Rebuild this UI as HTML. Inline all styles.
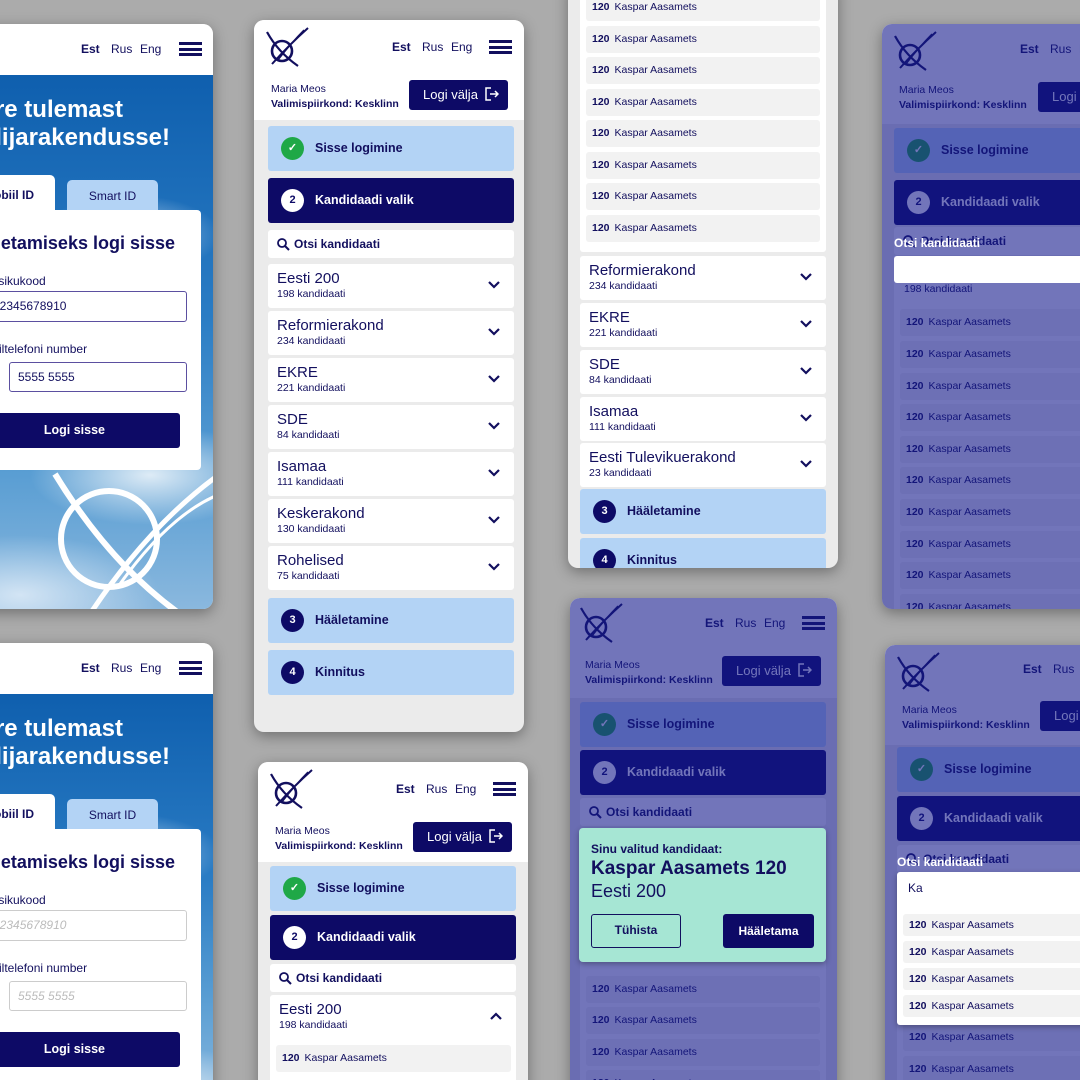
<!DOCTYPE html>
<html><head><meta charset="utf-8"><style>
*{box-sizing:border-box;margin:0;padding:0}
html{width:1080px;height:1080px;overflow:hidden}
body{width:1080px;height:1080px;overflow:hidden;background:#ababab;font-family:"Liberation Sans",sans-serif;color:#120f5e;position:relative}
.ph{position:absolute;border-radius:10px;overflow:hidden;background:#ebebeb;box-shadow:0 4px 14px rgba(0,0,0,.35)}
.ab{position:absolute}
.hdr{position:absolute;left:0;top:0;width:100%;height:100px;background:#fff}
.lang{position:absolute;top:20px;font-size:12px}
.ham{position:absolute;width:23px;height:14px;border-top:3px solid #120f5e;border-bottom:3px solid #120f5e}
.ham:after{content:"";position:absolute;left:0;right:0;top:2.5px;height:3px;background:#120f5e}
.nm{position:absolute;left:17px;top:62px;font-size:10.5px;line-height:15px}
.out{position:absolute;left:155px;top:60px;width:99px;height:30px;background:#0d0a66;color:#fff;border-radius:3px;font-size:13px;line-height:30px;padding-left:14px}
.step{position:absolute;left:14px;width:246px;height:45px;border-radius:3px;font-size:12.5px;font-weight:bold;line-height:45px;padding-left:47px}
.s1{background:#b3d3f5}
.s2{background:#0d0a66;color:#fff}
.s3{background:#b3d3f5}
.circ{position:absolute;left:13px;top:11px;width:23px;height:23px;border-radius:50%;line-height:23px;text-align:center;font-size:11px}
.s1 .circ{background:#1fa847;color:#fff}
.s2 .circ{background:#fff;color:#0d0a66}
.s3 .circ{background:#0d0a66;color:#fff}
.srch{position:absolute;left:14px;width:246px;height:28px;background:#fff;border-radius:3px;font-size:12px;font-weight:bold;line-height:28px;padding-left:26px}
.card{position:absolute;left:14px;width:246px;height:44px;background:#fff;border-radius:3px;padding:6px 0 0 9px}
.card b{display:block;font-weight:normal;font-size:15px;line-height:17px}
.card i{display:block;font-style:normal;font-size:10.5px;line-height:14px}
.chev{position:absolute;right:14px;top:17px}
.it{position:absolute;height:27px;background:#f2f2f2;border-radius:3px;font-size:10.5px;line-height:27px;padding-left:6px}
.it b{margin-right:5px}
.ov{position:absolute;left:0;top:0;right:0;bottom:0;background:rgba(20,25,140,.6)}
.sky{position:absolute;left:0;top:51px;right:0;bottom:0;background:radial-gradient(ellipse 120px 50px at 180px 400px,rgba(255,255,255,.8),rgba(255,255,255,0)),radial-gradient(ellipse 140px 60px at 50px 520px,rgba(230,240,250,.8),rgba(255,255,255,0)),radial-gradient(ellipse 90px 40px at 160px 160px,rgba(230,240,250,.7),rgba(255,255,255,0)),linear-gradient(180deg,#0f5fae 0%,#2a7cc4 45%,#5a9ed3 75%,#8ab8de 100%)}
.ttl{position:absolute;color:#fff;font-weight:bold;font-size:24px;white-space:nowrap}
.inp{position:absolute;border:1px solid #5b4fa0;border-radius:3px;background:#fff;font-size:12px;padding-left:8px}
</style></head><body>

<svg width="0" height="0" style="position:absolute"><defs>
<g id="logo"><circle cx="18" cy="25" r="10" fill="none" stroke="#120f5e" stroke-width="2.6"/><path d="M3 6 Q14 26 34 40" fill="none" stroke="#120f5e" stroke-width="2.2"/><path d="M8 38 Q26 18 44 2" fill="none" stroke="#120f5e" stroke-width="2"/><path d="M14 34 Q28 16 40 4" fill="none" stroke="#120f5e" stroke-width="1.4"/></g>
<g id="chv"><path d="M1 1 L6 6 L11 1" fill="none" stroke="#120f5e" stroke-width="2.2"/></g>
<g id="mag"><circle cx="5" cy="5" r="4" fill="none" stroke="#120f5e" stroke-width="1.8"/><path d="M8 8 L12 12" stroke="#120f5e" stroke-width="2"/></g>
<g id="exit"><path d="M6 1 H1 V13 H6" fill="none" stroke="#fff" stroke-width="1.5"/><path d="M5 7 H13 M10 4 L13 7 L10 10" fill="none" stroke="#fff" stroke-width="1.5"/></g>
</defs></svg>

<!-- Phone A -->
<div class="ph" style="left:-30px;top:24px;width:243px;height:585px">
 <div class="ab" style="left:0;top:0;width:100%;height:51px;background:#fff"></div>
 <div class="lang" style="left:111px;top:18px;font-weight:bold">Est</div>
 <div class="lang" style="left:141px;top:18px">Rus</div>
 <div class="lang" style="left:170px;top:18px">Eng</div>
 <div class="ham" style="left:209px;top:18px"></div>
 <div class="sky"></div>
 <svg class="ab" style="left:0;top:420px" width="243" height="165"><circle cx="139" cy="95" r="48" fill="none" stroke="#fff" stroke-width="6"/><path d="M85 30 Q140 120 210 170" fill="none" stroke="#fff" stroke-width="6"/><path d="M120 170 Q180 80 250 30" fill="none" stroke="#fff" stroke-width="5"/><path d="M150 140 Q200 70 250 50" fill="none" stroke="#fff" stroke-width="3"/></svg>
 <div class="ttl" style="right:90px;top:72px">Tere tulemast</div>
 <div class="ttl" style="right:43px;top:100px">valijarakendusse!</div>
 <div class="ab" style="left:0;top:151px;width:85px;height:40px;background:#fff;border-radius:5px 5px 0 0;font-size:12px;font-weight:bold;line-height:40px;padding-left:14px">Mobiil ID</div>
 <div class="ab" style="left:97px;top:156px;width:91px;height:35px;background:#b3d3f5;border-radius:5px 5px 0 0;font-size:12px;line-height:33px;text-align:center">Smart ID</div>
 <div class="ab" style="left:0;top:186px;width:231px;height:260px;background:#fff;border-radius:0 4px 4px 4px"></div>
 <div class="ab" style="right:38px;top:209px;font-size:18px;font-weight:bold;white-space:nowrap">Hääletamiseks logi sisse</div>
 <div class="ab" style="left:25px;top:250px;font-size:12px">Isikukood</div>
 <div class="inp" style="left:12px;top:267px;width:205px;height:31px;line-height:29px;padding-left:10px">12345678910</div>
 <div class="ab" style="left:3px;top:318px;font-size:12px">Mobiiltelefoni number</div>
 <div class="inp" style="left:39px;top:338px;width:178px;height:30px;line-height:28px">5555 5555</div>
 <div class="ab" style="left:12px;top:389px;width:198px;height:35px;background:#0d0a66;border-radius:3px;color:#fff;font-size:12.5px;font-weight:bold;line-height:35px;text-align:right;padding-right:75px">Logi sisse</div>
</div>

<!-- Phone B -->
<div class="ph" style="left:-30px;top:643px;width:243px;height:460px">
 <div class="ab" style="left:0;top:0;width:100%;height:51px;background:#fff"></div>
 <div class="lang" style="left:111px;top:18px;font-weight:bold">Est</div>
 <div class="lang" style="left:141px;top:18px">Rus</div>
 <div class="lang" style="left:170px;top:18px">Eng</div>
 <div class="ham" style="left:209px;top:18px"></div>
 <div class="sky"></div>
 <div class="ttl" style="right:90px;top:72px">Tere tulemast</div>
 <div class="ttl" style="right:43px;top:100px">valijarakendusse!</div>
 <div class="ab" style="left:0;top:151px;width:85px;height:40px;background:#fff;border-radius:5px 5px 0 0;font-size:12px;font-weight:bold;line-height:40px;padding-left:14px">Mobiil ID</div>
 <div class="ab" style="left:97px;top:156px;width:91px;height:35px;background:#b3d3f5;border-radius:5px 5px 0 0;font-size:12px;line-height:33px;text-align:center">Smart ID</div>
 <div class="ab" style="left:0;top:186px;width:231px;height:274px;background:#fff;border-radius:0 4px 0 0"></div>
 <div class="ab" style="right:38px;top:209px;font-size:18px;font-weight:bold;white-space:nowrap">Hääletamiseks logi sisse</div>
 <div class="ab" style="left:25px;top:250px;font-size:12px">Isikukood</div>
 <div class="inp" style="left:12px;top:267px;width:205px;height:31px;line-height:29px;padding-left:10px;border-color:#ccc;color:#bbb;font-style:italic">12345678910</div>
 <div class="ab" style="left:3px;top:318px;font-size:12px">Mobiiltelefoni number</div>
 <div class="inp" style="left:39px;top:338px;width:178px;height:30px;line-height:28px;border-color:#ccc;color:#bbb;font-style:italic">5555 5555</div>
 <div class="ab" style="left:12px;top:389px;width:198px;height:35px;background:#0d0a66;border-radius:3px;color:#fff;font-size:12.5px;font-weight:bold;line-height:35px;text-align:right;padding-right:75px">Logi sisse</div>
</div>

<!-- Phone C -->
<div class="ph" style="left:254px;top:20px;width:270px;height:712px">
 <div class="hdr"></div>
 <svg class="ab" style="left:10px;top:6px" width="46" height="42"><use href="#logo"/></svg>
 <div class="lang" style="left:138px;font-weight:bold">Est</div><div class="lang" style="left:168px">Rus</div><div class="lang" style="left:197px">Eng</div>
 <div class="ham" style="left:235px;top:20px"></div>
 <div class="nm">Maria Meos<br><b>Valimispiirkond: Kesklinn</b></div>
 <div class="out">Logi välja <svg width="14" height="14" style="vertical-align:-2px;margin-left:3px"><use href="#exit"/></svg></div>
 <div class="step s1" style="top:106px"><span class="circ">✓</span>Sisse logimine</div>
 <div class="step s2" style="top:158px"><span class="circ">2</span>Kandidaadi valik</div>
 <div class="srch" style="top:210px"><svg class="ab" style="left:9px;top:8px" width="13" height="13"><use href="#mag"/></svg>Otsi kandidaati</div>
 <div class="card" style="top:244px"><b>Eesti 200</b><i>198 kandidaati</i><svg class="chev" width="12" height="8"><use href="#chv"/></svg></div>
 <div class="card" style="top:291px"><b>Reformierakond</b><i>234 kandidaati</i><svg class="chev" width="12" height="8"><use href="#chv"/></svg></div>
 <div class="card" style="top:338px"><b>EKRE</b><i>221 kandidaati</i><svg class="chev" width="12" height="8"><use href="#chv"/></svg></div>
 <div class="card" style="top:385px"><b>SDE</b><i>84 kandidaati</i><svg class="chev" width="12" height="8"><use href="#chv"/></svg></div>
 <div class="card" style="top:432px"><b>Isamaa</b><i>111 kandidaati</i><svg class="chev" width="12" height="8"><use href="#chv"/></svg></div>
 <div class="card" style="top:479px"><b>Keskerakond</b><i>130 kandidaati</i><svg class="chev" width="12" height="8"><use href="#chv"/></svg></div>
 <div class="card" style="top:526px"><b>Rohelised</b><i>75 kandidaati</i><svg class="chev" width="12" height="8"><use href="#chv"/></svg></div>
 <div class="step s3" style="top:578px"><span class="circ">3</span>Hääletamine</div>
 <div class="step s3" style="top:630px"><span class="circ">4</span>Kinnitus</div>
</div>

<!-- Phone D -->
<div class="ph" style="left:258px;top:762px;width:270px;height:340px">
 <div class="hdr"></div>
 <svg class="ab" style="left:10px;top:6px" width="46" height="42"><use href="#logo"/></svg>
 <div class="lang" style="left:138px;font-weight:bold">Est</div><div class="lang" style="left:168px">Rus</div><div class="lang" style="left:197px">Eng</div>
 <div class="ham" style="left:235px;top:20px"></div>
 <div class="nm">Maria Meos<br><b>Valimispiirkond: Kesklinn</b></div>
 <div class="out">Logi välja <svg width="14" height="14" style="vertical-align:-2px;margin-left:3px"><use href="#exit"/></svg></div>
 <div class="step s1" style="top:104px;left:12px"><span class="circ">✓</span>Sisse logimine</div>
 <div class="step s2" style="top:153px;left:12px"><span class="circ">2</span>Kandidaadi valik</div>
 <div class="srch" style="top:202px;left:12px"><svg class="ab" style="left:9px;top:8px" width="13" height="13"><use href="#mag"/></svg>Otsi kandidaati</div>
 <div class="card" style="top:233px;left:12px;height:120px"><b>Eesti 200</b><i>198 kandidaati</i><svg class="chev" width="12" height="8" style="transform:rotate(180deg)"><use href="#chv"/></svg></div>
 <div class="it" style="left:18px;top:283px;width:235px"><b>120</b>Kaspar Aasamets</div>
</div>

<!-- Phone E -->
<div class="ph" style="left:568px;top:-20px;width:270px;height:588px">
 <div class="ab" style="left:12px;top:0;width:246px;height:272px;background:#fff;border-radius:3px"></div>
 <div class="it" style="left:18px;top:14px;width:234px"><b>120</b>Kaspar Aasamets</div>
 <div class="it" style="left:18px;top:46px;width:234px"><b>120</b>Kaspar Aasamets</div>
 <div class="it" style="left:18px;top:77px;width:234px"><b>120</b>Kaspar Aasamets</div>
 <div class="it" style="left:18px;top:109px;width:234px"><b>120</b>Kaspar Aasamets</div>
 <div class="it" style="left:18px;top:140px;width:234px"><b>120</b>Kaspar Aasamets</div>
 <div class="it" style="left:18px;top:172px;width:234px"><b>120</b>Kaspar Aasamets</div>
 <div class="it" style="left:18px;top:203px;width:234px"><b>120</b>Kaspar Aasamets</div>
 <div class="it" style="left:18px;top:235px;width:234px"><b>120</b>Kaspar Aasamets</div>
 <div class="card" style="left:12px;top:276px"><b>Reformierakond</b><i>234 kandidaati</i><svg class="chev" width="12" height="8"><use href="#chv"/></svg></div>
 <div class="card" style="left:12px;top:323px"><b>EKRE</b><i>221 kandidaati</i><svg class="chev" width="12" height="8"><use href="#chv"/></svg></div>
 <div class="card" style="left:12px;top:370px"><b>SDE</b><i>84 kandidaati</i><svg class="chev" width="12" height="8"><use href="#chv"/></svg></div>
 <div class="card" style="left:12px;top:417px"><b>Isamaa</b><i>111 kandidaati</i><svg class="chev" width="12" height="8"><use href="#chv"/></svg></div>
 <div class="card" style="left:12px;top:463px"><b>Eesti Tulevikuerakond</b><i>23 kandidaati</i><svg class="chev" width="12" height="8"><use href="#chv"/></svg></div>
 <div class="step s3" style="left:12px;top:509px"><span class="circ">3</span>Hääletamine</div>
 <div class="step s3" style="left:12px;top:558px"><span class="circ">4</span>Kinnitus</div>
</div>

<!-- Phone F -->
<div class="ph" style="left:570px;top:598px;width:267px;height:500px">
 <div class="hdr"></div>
 <svg class="ab" style="left:8px;top:4px" width="46" height="42"><use href="#logo"/></svg>
 <div class="lang" style="left:135px;top:18px;font-weight:bold">Est</div><div class="lang" style="left:165px;top:18px">Rus</div><div class="lang" style="left:194px;top:18px">Eng</div>
 <div class="ham" style="left:232px;top:18px"></div>
 <div class="nm" style="left:15px;top:60px">Maria Meos<br><b>Valimispiirkond: Kesklinn</b></div>
 <div class="out" style="left:152px;top:58px">Logi välja <svg width="14" height="14" style="vertical-align:-2px;margin-left:3px"><use href="#exit"/></svg></div>
 <div class="step s1" style="left:10px;top:104px"><span class="circ">✓</span>Sisse logimine</div>
 <div class="step s2" style="left:10px;top:152px"><span class="circ">2</span>Kandidaadi valik</div>
 <div class="srch" style="left:10px;top:200px"><svg class="ab" style="left:9px;top:8px" width="13" height="13"><use href="#mag"/></svg>Otsi kandidaati</div>
 <div class="ab" style="left:10px;top:230px;width:246px;height:270px;background:#fff"></div>
 <div class="it" style="left:16px;top:378px;width:234px"><b>120</b>Kaspar Aasamets</div>
 <div class="it" style="left:16px;top:409px;width:234px"><b>120</b>Kaspar Aasamets</div>
 <div class="it" style="left:16px;top:441px;width:234px"><b>120</b>Kaspar Aasamets</div>
 <div class="it" style="left:16px;top:472px;width:234px"><b>120</b>Kaspar Aasamets</div>
 <div class="ov"></div>
 <div class="ab" style="left:9px;top:230px;width:247px;height:134px;background:#a6e6d4;border-radius:4px;box-shadow:0 2px 6px rgba(0,0,0,.3);padding:14px 12px">
  <div style="font-size:12px;font-weight:bold">Sinu valitud kandidaat:</div>
  <div style="font-size:19px;font-weight:bold;margin-top:2px">Kaspar Aasamets 120</div>
  <div style="font-size:18px;margin-top:1px">Eesti 200</div>
  <div class="ab" style="left:12px;top:86px;width:90px;height:34px;border:1.5px solid #120f5e;border-radius:3px;font-size:12px;font-weight:bold;line-height:31px;text-align:center">Tühista</div>
  <div class="ab" style="left:144px;top:86px;width:91px;height:34px;background:#0d0a66;color:#fff;border-radius:3px;font-size:12px;font-weight:bold;line-height:34px;text-align:center">Hääletama</div>
 </div>
</div>

<!-- Phone G -->
<div class="ph" style="left:882px;top:24px;width:270px;height:585px">
 <div class="hdr"></div>
 <svg class="ab" style="left:10px;top:6px" width="46" height="42"><use href="#logo"/></svg>
 <div class="lang" style="left:138px;top:18px;font-weight:bold">Est</div><div class="lang" style="left:168px;top:18px">Rus</div><div class="lang" style="left:197px;top:18px">Eng</div>
 <div class="nm" style="left:17px;top:59px">Maria Meos<br><b>Valimispiirkond: Kesklinn</b></div>
 <div class="out" style="left:156px;top:58px">Logi välja</div>
 <div class="step s1" style="left:12px;top:104px"><span class="circ">✓</span>Sisse logimine</div>
 <div class="step s2" style="left:12px;top:156px"><span class="circ">2</span>Kandidaadi valik</div>
 <div class="srch" style="left:12px;top:203px"><svg class="ab" style="left:9px;top:8px" width="13" height="13"><use href="#mag"/></svg>Otsi kandidaati</div>
 <div class="ab" style="left:12px;top:232px;width:246px;height:360px;background:#fff;font-size:10.5px;padding:27px 0 0 10px">198 kandidaati</div>
 <div class="it" style="left:18px;top:285px;width:234px"><b>120</b>Kaspar Aasamets</div>
 <div class="it" style="left:18px;top:317px;width:234px"><b>120</b>Kaspar Aasamets</div>
 <div class="it" style="left:18px;top:349px;width:234px"><b>120</b>Kaspar Aasamets</div>
 <div class="it" style="left:18px;top:380px;width:234px"><b>120</b>Kaspar Aasamets</div>
 <div class="it" style="left:18px;top:412px;width:234px"><b>120</b>Kaspar Aasamets</div>
 <div class="it" style="left:18px;top:443px;width:234px"><b>120</b>Kaspar Aasamets</div>
 <div class="it" style="left:18px;top:475px;width:234px"><b>120</b>Kaspar Aasamets</div>
 <div class="it" style="left:18px;top:507px;width:234px"><b>120</b>Kaspar Aasamets</div>
 <div class="it" style="left:18px;top:538px;width:234px"><b>120</b>Kaspar Aasamets</div>
 <div class="it" style="left:18px;top:570px;width:234px"><b>120</b>Kaspar Aasamets</div>
 <div class="ov"></div>
 <div class="ab" style="left:12px;top:212px;color:#fff;font-size:12px;font-weight:bold">Otsi kandidaati</div>
 <div class="ab" style="left:12px;top:232px;width:250px;height:27px;background:#fff;border-radius:3px"></div>
</div>

<!-- Phone H -->
<div class="ph" style="left:885px;top:645px;width:270px;height:460px">
 <div class="hdr"></div>
 <svg class="ab" style="left:10px;top:6px" width="46" height="42"><use href="#logo"/></svg>
 <div class="lang" style="left:138px;top:17px;font-weight:bold">Est</div><div class="lang" style="left:168px;top:17px">Rus</div>
 <div class="nm" style="left:17px;top:58px">Maria Meos<br><b>Valimispiirkond: Kesklinn</b></div>
 <div class="out" style="left:155px;top:56px">Logi välja</div>
 <div class="step s1" style="left:12px;top:102px"><span class="circ">✓</span>Sisse logimine</div>
 <div class="step s2" style="left:12px;top:151px"><span class="circ">2</span>Kandidaadi valik</div>
 <div class="srch" style="left:12px;top:200px"><svg class="ab" style="left:9px;top:8px" width="13" height="13"><use href="#mag"/></svg>Otsi kandidaati</div>
 <div class="ab" style="left:12px;top:230px;width:246px;height:240px;background:#fff"></div>
 <div class="it" style="left:18px;top:379px;width:234px"><b>120</b>Kaspar Aasamets</div>
 <div class="it" style="left:18px;top:411px;width:234px"><b>120</b>Kaspar Aasamets</div>
 <div class="ov"></div>
 <div class="ab" style="left:12px;top:210px;color:#fff;font-size:12px;font-weight:bold">Otsi kandidaati</div>
 <div class="ab" style="left:12px;top:227px;width:250px;height:153px;background:#fff;border-radius:3px;box-shadow:0 2px 6px rgba(0,0,0,.3)">
  <div class="ab" style="left:11px;top:9px;font-size:12px">Ka</div>
  <div class="it" style="left:6px;top:42px;width:240px;height:22px;line-height:22px"><b>120</b>Kaspar Aasamets</div>
  <div class="it" style="left:6px;top:69px;width:240px;height:22px;line-height:22px"><b>120</b>Kaspar Aasamets</div>
  <div class="it" style="left:6px;top:96px;width:240px;height:22px;line-height:22px"><b>120</b>Kaspar Aasamets</div>
  <div class="it" style="left:6px;top:123px;width:240px;height:22px;line-height:22px"><b>120</b>Kaspar Aasamets</div>
 </div>
</div>

</body></html>
